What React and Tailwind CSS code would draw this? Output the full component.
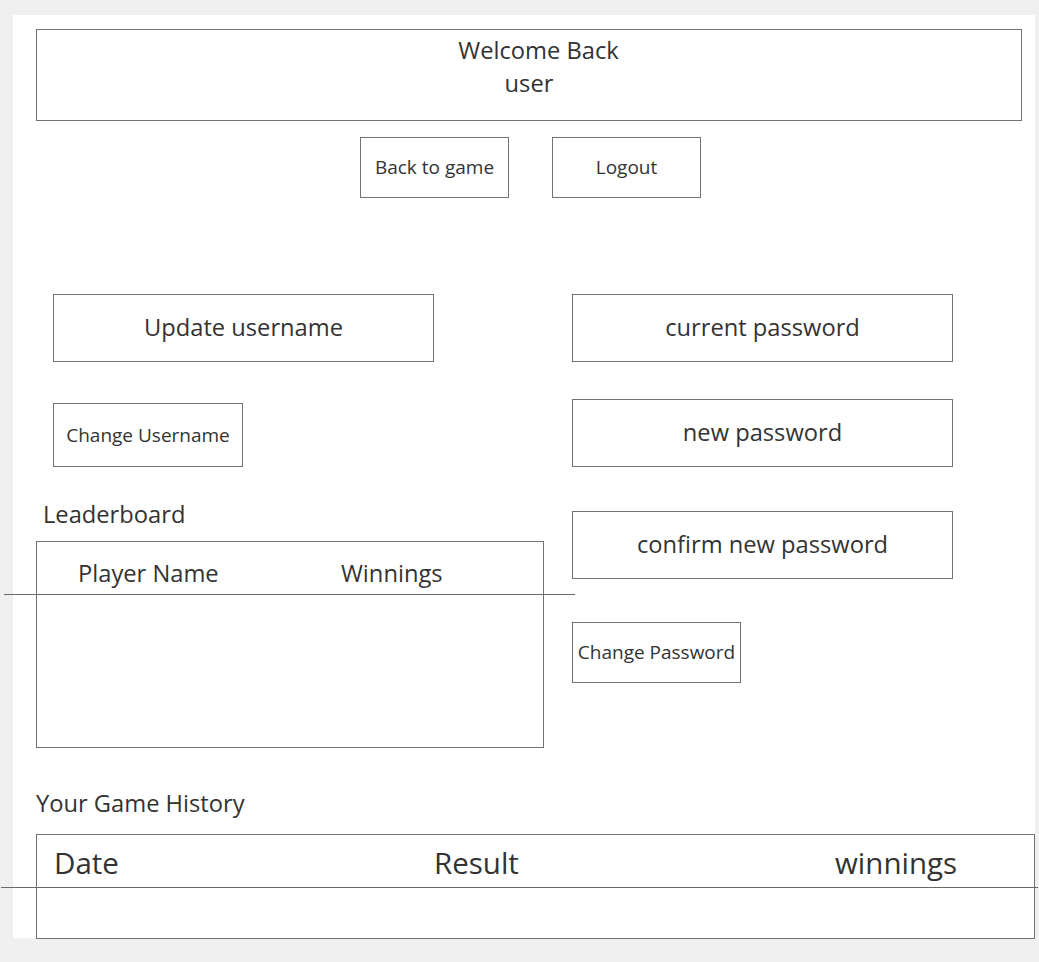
const boxBorder = "border border-[#727272]";

export default function App() {
  return (
    <div
      className="min-h-[962px] w-[1039px] bg-[#f0f0f0] pt-[15px] pl-[13px] text-[#333333]"
      style={{ fontFamily: '"Open Sans", "Noto Sans", sans-serif' }}
    >
      <div className="w-[1022px] h-[923px] bg-white pt-[14px] pl-[23px]">
        {/* Header */}
        <div className={`${boxBorder} w-[986px] h-[92px] flex flex-col items-center pt-[4px]`}>
          <span className="text-[23.7px] leading-[33px] pl-[19px]">Welcome Back</span>
          <span className="text-[23.7px] leading-[33px]">user</span>
        </div>

        {/* Top buttons */}
        <div className="flex mt-[16px] ml-[324px] gap-[43px]">
          <div className={`${boxBorder} w-[149px] h-[61px] flex items-center justify-center text-[19px]`}>
            Back to game
          </div>
          <div className={`${boxBorder} w-[149px] h-[61px] flex items-center justify-center text-[19px]`}>
            Logout
          </div>
        </div>

        {/* Two columns */}
        <div className="flex mt-[96px] gap-[28px]">
          {/* Left column */}
          <div className="w-[508px] flex flex-col">
            <div className={`${boxBorder} ml-[17px] w-[381px] h-[68px] flex items-center justify-center text-[23.7px]`}>
              Update username
            </div>
            <div className={`${boxBorder} ml-[17px] mt-[41px] w-[190px] h-[64px] flex items-center justify-center text-[19px]`}>
              Change Username
            </div>
            <div className="mt-[32px] pl-[7px] h-[30px] leading-[30px] text-[23.7px]">Leaderboard</div>
            <div className={`${boxBorder} relative mt-[12px] w-[508px] h-[207px]`}>
              <div className="flex pt-[16px] pl-[41px] text-[23.7px] leading-[30px]">
                <span className="w-[263px]">Player Name</span>
                <span>Winnings</span>
              </div>
              <div className="absolute top-[52px] -left-[33px] -right-[32px] h-px bg-[#6a6a6a]" />
            </div>
          </div>

          {/* Right column */}
          <div className="flex flex-col">
            <div className={`${boxBorder} w-[381px] h-[68px] flex items-center justify-center text-[23.7px]`}>
              current password
            </div>
            <div className={`${boxBorder} mt-[37px] w-[381px] h-[68px] flex items-center justify-center text-[23.7px]`}>
              new password
            </div>
            <div className={`${boxBorder} mt-[44px] w-[381px] h-[68px] flex items-center justify-center text-[23.7px]`}>
              confirm new password
            </div>
            <div className={`${boxBorder} mt-[43px] w-[169px] h-[61px] flex items-center justify-center text-[19px]`}>
              Change Password
            </div>
          </div>
        </div>

        {/* Game history */}
        <div className="mt-[40px] h-[30px] leading-[30px] text-[23.7px]">Your Game History</div>
        <div className={`${boxBorder} relative mt-[16px] w-[999px] h-[105px]`}>
          <div className="flex pt-[9px] pl-[17px] text-[29.5px] leading-[38px]">
            <span className="w-[380px]">Date</span>
            <span className="w-[401px]">Result</span>
            <span>winnings</span>
          </div>
          <div className="absolute top-[52px] -left-[36px] -right-[4px] h-px bg-[#6a6a6a]" />
        </div>
      </div>
    </div>
  );
}
